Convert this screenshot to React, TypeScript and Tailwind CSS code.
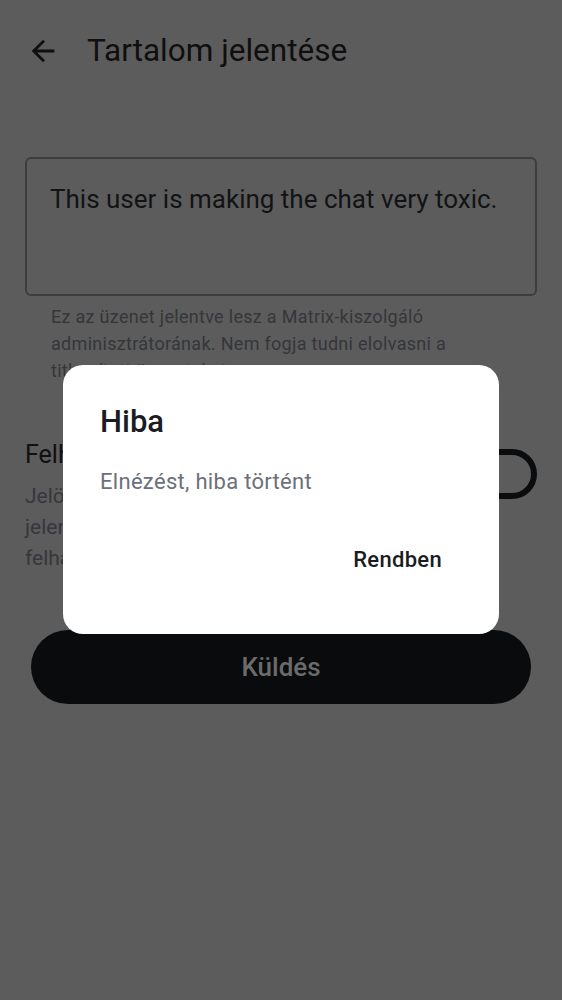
const font = { fontFamily: "Roboto, 'Noto Sans', sans-serif" };

function BackArrow() {
  return (
    <svg width="34" height="34" viewBox="0 0 24 24" fill="#0f0f10">
      <path d="M20 11H7.83l5.59-5.59L12 4l-8 8 8 8 1.41-1.41L7.83 13H20v-2z" />
    </svg>
  );
}

function ErrorDialog() {
  return (
    <div className="absolute left-[63px] top-[365px] flex h-[269px] w-[436px] flex-col rounded-[20px] bg-white pl-[37px] pr-[57px] pt-[39px]">
      <h2 className="text-[31px] leading-[36px] font-medium text-[#1b1c1f]">Hiba</h2>
      <p className="mt-[28px] text-[22px] leading-[28px] tracking-[0.3px] text-[#6b7079]">Elnézést, hiba történt</p>
      <div className="mt-[50px] flex justify-end">
        <button className="text-[22px] leading-[28px] font-medium tracking-[0.3px] text-[#1b1c1f]">Rendben</button>
      </div>
    </div>
  );
}

export default function App() {
  return (
    <main style={font} className="relative min-h-screen w-[562px] bg-[#5c5c5c]">
      <header className="flex items-center gap-[27px] pl-[26px] pt-[33px]">
        <BackArrow />
        <h1 className="text-[31.5px] leading-[36px] text-[#0f0f10]">Tartalom jelentése</h1>
      </header>

      <section className="mt-[88px] px-[25px]">
        <div className="h-[139px] rounded-[6px] border-2 border-[#3b3d41] px-[23px] pt-[24px]">
          <p className="text-[26px] leading-[32px] text-[#121315]">This user is making the chat very toxic.</p>
        </div>
        <p className="mt-[7px] pl-[26px] text-[18px] leading-[27px] tracking-[0.3px] text-[#34363a]">
          Ez az üzenet jelentve lesz a Matrix-kiszolgáló
          <br />
          adminisztrátorának. Nem fogja tudni elolvasni a
          <br />
          titkosított üzeneteket.
        </p>
      </section>

      <section className="mt-[55px] flex items-center justify-between px-[25px]">
        <div>
          <h3 className="text-[25px] leading-[32px] text-[#101010]">Felhasználó blokkolása</h3>
          <p className="mt-[10px] text-[21px] leading-[31px] text-[#35373b]">
            Jelölje be, ha el szeretné rejteni a
            <br />
            jelentett felhasználó összes jelenlegi és
            <br />
            felhasználói üzenetét
          </p>
        </div>
        <div className="mb-[66px] h-[50px] w-[84px] shrink-0 rounded-full border-[6px] border-[#0b0c0e]" />
      </section>

      <div className="mt-[56px] px-[31px]">
        <button className="flex h-[74px] w-[500px] items-center justify-center rounded-full bg-[#0a0b0d] text-[26px] font-medium text-[#6b6b6b]">
          Küldés
        </button>
      </div>

      <ErrorDialog />
    </main>
  );
}
